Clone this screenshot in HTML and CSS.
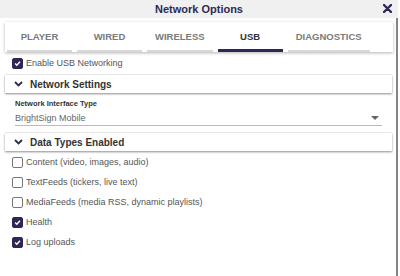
FILE: index.html
```html
<!DOCTYPE html>
<html lang="en">
<head>
    <meta charset="UTF-8">
    <title>Network Options</title>
    <link rel="stylesheet" href="styles.css">
</head>
<body>
    <div class="dialog">
        <header class="dialog-header">
            <h1>Network Options</h1>
            <span class="close">
                <svg width="9" height="9" viewBox="0 0 9 9"><path d="M1 1 L8 8 M8 1 L1 8" stroke="#2e2859" stroke-width="2.4" stroke-linecap="round"/></svg>
            </span>
        </header>

        <div class="dialog-body">
            <nav class="tabs">
                <span class="tab">PLAYER</span>
                <span class="tab">WIRED</span>
                <span class="tab">WIRELESS</span>
                <span class="tab active">USB</span>
                <span class="tab">DIAGNOSTICS</span>
            </nav>

            <div class="check-row">
                <span class="box checked"><svg viewBox="0 0 11 11"><path d="M2.6 5.6 L4.7 7.6 L8.5 3.4" fill="none" stroke="#fff" stroke-width="1.8"/></svg></span>
                Enable USB Networking
            </div>

            <section class="panel">
                <div class="panel-header">
                    <svg class="chevron" width="9" height="6" viewBox="0 0 9 6"><path d="M1 1 L4.5 4.5 L8 1" fill="none" stroke="#2e2a4a" stroke-width="1.8"/></svg>
                    Network Settings
                </div>
                <div class="panel-content">
                    <div class="field-label">Network Interface Type</div>
                    <div class="select">
                        <span>BrightSign Mobile</span>
                        <span class="caret"></span>
                    </div>
                </div>
            </section>

            <section class="panel">
                <div class="panel-header">
                    <svg class="chevron" width="9" height="6" viewBox="0 0 9 6"><path d="M1 1 L4.5 4.5 L8 1" fill="none" stroke="#2e2a4a" stroke-width="1.8"/></svg>
                    Data Types Enabled
                </div>
                <div class="check-list">
                    <div class="check-row"><span class="box"></span>Content (video, images, audio)</div>
                    <div class="check-row"><span class="box"></span>TextFeeds (tickers, live text)</div>
                    <div class="check-row"><span class="box"></span>MediaFeeds (media RSS, dynamic playlists)</div>
                    <div class="check-row"><span class="box checked"><svg viewBox="0 0 11 11"><path d="M2.6 5.6 L4.7 7.6 L8.5 3.4" fill="none" stroke="#fff" stroke-width="1.8"/></svg></span>Health</div>
                    <div class="check-row"><span class="box checked"><svg viewBox="0 0 11 11"><path d="M2.6 5.6 L4.7 7.6 L8.5 3.4" fill="none" stroke="#fff" stroke-width="1.8"/></svg></span>Log uploads</div>
                </div>
            </section>
        </div>
    </div>
</body>
</html>
```

FILE: styles.css
```css
* {
    margin: 0;
    padding: 0;
    box-sizing: border-box;
}

body {
    font-family: 'Liberation Sans', Arial, sans-serif;
    background: #fff;
    width: 400px;
    height: 276px;
    overflow: hidden;
}

.dialog {
    width: 398px;
}

.dialog-header {
    height: 18px;
    background: #f0f0f0;
    display: flex;
    align-items: center;
    justify-content: center;
    position: relative;
}

.dialog-header h1 {
    font-size: 11px;
    font-weight: bold;
    color: #2d2a55;
}

.close {
    position: absolute;
    right: 6px;
    top: 4px;
    display: flex;
}

.dialog-body {
    height: 258px;
    border-right: 2px solid #858585;
    padding-top: 4px;
}

.tabs {
    display: flex;
    gap: 5px;
    margin: 0 3px 0 5px;
    padding: 2px 2px 0;
    background: #fff;
    box-shadow: 0 1px 3px rgba(0, 0, 0, 0.3);
}

.tab {
    min-width: 65px;
    height: 28px;
    padding: 0 8px 1px;
    display: flex;
    align-items: center;
    justify-content: center;
    font-size: 9.5px;
    font-weight: bold;
    color: #7a7a7a;
    border-bottom: 2px solid #d8d8d8;
}

.tab.active {
    color: #333;
    border-bottom: 3px solid #2e2859;
    padding-bottom: 0;
}

.check-row {
    height: 20px;
    display: flex;
    align-items: center;
    gap: 3px;
    padding-left: 12px;
    font-size: 9px;
    color: #555;
}

.dialog-body > .check-row {
    margin-top: 1px;
}

.box {
    width: 11px;
    height: 11px;
    border: 1px solid #777;
    border-radius: 2px;
    background: #fff;
    display: flex;
}

.box.checked {
    background: #2e2756;
    border-color: #2e2756;
}

.box svg {
    width: 100%;
    height: 100%;
}

.panel {
    margin: 0 4px 0 5px;
    border-top: 1px solid #f0f0f0;
}

.dialog-body > .check-row + .panel {
    margin-top: 1px;
}

.panel-header {
    height: 18px;
    display: flex;
    align-items: center;
    gap: 7px;
    padding-left: 9px;
    font-size: 10px;
    font-weight: bold;
    color: #333;
    box-shadow: 0 1px 2px rgba(0, 0, 0, 0.45);
}

.panel-content {
    padding: 6px 10px 6px;
}

.field-label {
    font-size: 7.5px;
    font-weight: bold;
    color: #333;
    line-height: 10px;
}

.select {
    margin-top: 2px;
    height: 15px;
    display: flex;
    align-items: center;
    justify-content: space-between;
    font-size: 9px;
    color: #666;
    border-bottom: 1px solid #bbb;
}

.caret {
    width: 0;
    height: 0;
    margin-right: 3px;
    border-left: 4px solid transparent;
    border-right: 4px solid transparent;
    border-top: 4px solid #666;
}

.check-list {
    margin-left: -5px;
    padding-top: 1px;
}
```
